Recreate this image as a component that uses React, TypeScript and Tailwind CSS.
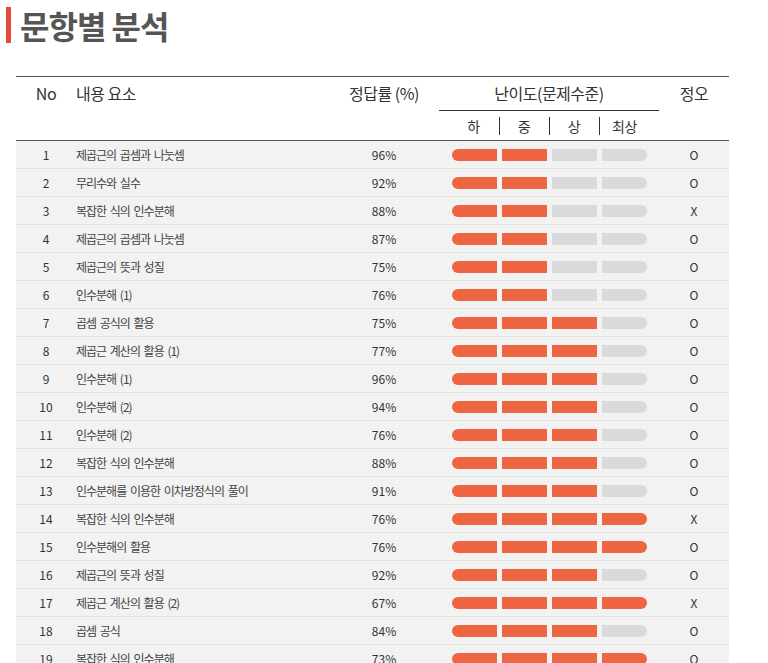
const rows: [number, string, number, number, string][] = [
  [1, '제곱근의 곱셈과 나눗셈', 96, 2, 'O'],
  [2, '무리수와 실수', 92, 2, 'O'],
  [3, '복잡한 식의 인수분해', 88, 2, 'X'],
  [4, '제곱근의 곱셈과 나눗셈', 87, 2, 'O'],
  [5, '제곱근의 뜻과 성질', 75, 2, 'O'],
  [6, '인수분해 (1)', 76, 2, 'O'],
  [7, '곱셈 공식의 활용', 75, 3, 'O'],
  [8, '제곱근 계산의 활용 (1)', 77, 3, 'O'],
  [9, '인수분해 (1)', 96, 3, 'O'],
  [10, '인수분해 (2)', 94, 3, 'O'],
  [11, '인수분해 (2)', 76, 3, 'O'],
  [12, '복잡한 식의 인수분해', 88, 3, 'O'],
  [13, '인수분해를 이용한 이차방정식의 풀이', 91, 3, 'O'],
  [14, '복잡한 식의 인수분해', 76, 4, 'X'],
  [15, '인수분해의 활용', 76, 4, 'O'],
  [16, '제곱근의 뜻과 성질', 92, 3, 'O'],
  [17, '제곱근 계산의 활용 (2)', 67, 4, 'X'],
  [18, '곱셈 공식', 84, 3, 'O'],
  [19, '복잡한 식의 인수분해', 73, 4, 'O'],
];

const cols = 'grid grid-cols-[60px_258px_100px_230px_64px]';

function LevelBar({ level }: { level: number }) {
  return (
    <div className="flex justify-center gap-[5px]">
      {[0, 1, 2, 3].map((i) => (
        <div
          key={i}
          className={[
            'h-3 w-[45px]',
            i < level ? 'bg-[#ee6541]' : 'bg-[#dadada]',
            i === 0 ? 'rounded-l-full' : '',
            i === 3 ? 'rounded-r-full' : '',
          ].join(' ')}
        />
      ))}
    </div>
  );
}

export default function App() {
  return (
    <div
      className="min-h-[663px] bg-white text-[#333]"
      style={{ fontFamily: '"Noto Sans CJK KR", sans-serif' }}
    >
      {/* title */}
      <div className="flex items-center pl-[6px] pt-[7px]">
        <div className="h-[36px] w-[5px] bg-[#e5493a]" />
        <h1 className="ml-[9px] text-[32px] font-bold leading-[36px] tracking-[-1px] text-[#555]">
          문항별 분석
        </h1>
      </div>

      <div className="ml-4 mt-[33px] w-[713px]">
        {/* header */}
        <div className={`${cols} border-y border-[#555] text-[16px] leading-[22px] tracking-[-0.5px]`}>
          <div className="pt-[5px] text-center">No</div>
          <div className="pt-[5px]">내용 요소</div>
          <div className="pt-[5px] text-center">정답률 (%)</div>
          <div>
            <div className="mx-[5px] border-b border-[#333] pt-[5px] pb-[6px] text-center">
              난이도(문제수준)
            </div>
            <div className="flex justify-center pt-[6px] pb-[5px] text-[14px] leading-[18px]">
              <span className="w-[50px] text-center">하</span>
              <span className="w-px bg-[#333]" />
              <span className="w-[49px] text-center">중</span>
              <span className="w-px bg-[#333]" />
              <span className="w-[49px] text-center">상</span>
              <span className="w-px bg-[#333]" />
              <span className="w-[50px] text-center">최상</span>
            </div>
          </div>
          <div className="pt-[5px] pr-[4px] text-center">정오</div>
        </div>

        {/* body */}
        {rows.map(([no, name, rate, level, ox]) => (
          <div
            key={no}
            className={`${cols} h-[28px] items-center border-b border-[#e0e0e0] bg-[#f2f2f2] text-[12px]`}
          >
            <div className="text-center">{no}</div>
            <div className="tracking-[-1px] [word-spacing:2px] text-[#444]">{name}</div>
            <div className="text-center">{rate}%</div>
            <LevelBar level={level} />
            <div className="pr-[4px] text-center">{ox}</div>
          </div>
        ))}
      </div>
    </div>
  );
}
